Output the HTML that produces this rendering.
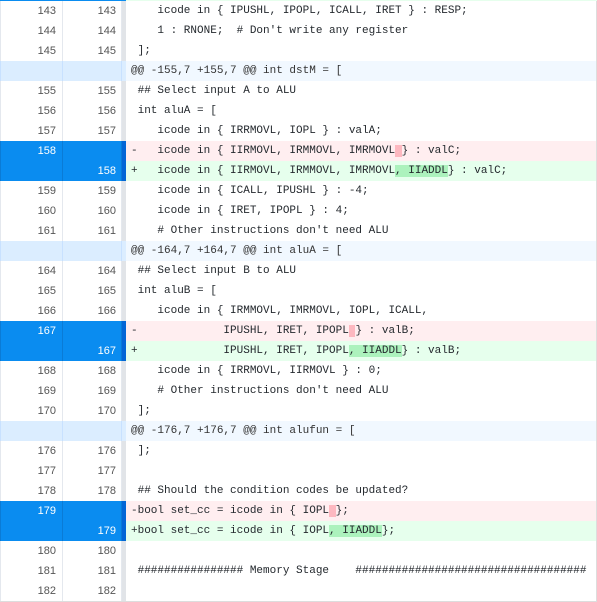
<!DOCTYPE html>
<html><head><meta charset="utf-8"><style>
*{margin:0;padding:0;box-sizing:border-box}
body{width:597px;height:602px;background:#fff;overflow:hidden;position:relative;font-family:"Liberation Sans",sans-serif}
#t{position:absolute;left:0;top:1px;width:597px;border-right:1px solid #ddd;border-bottom:1px solid #ddd}
.r{height:20px;display:flex;position:relative}
.n1,.n2{font-size:11px;color:#555;text-align:right;line-height:20px;border-right:1px solid #e4e8ee}
.n1{width:63px;padding-right:6px;border-left:1px solid #e4e8ee}
.n2{width:59px;padding-right:5px}
.g{width:4px;background:#e1e4e8}
.c{flex:1;font-family:"Liberation Mono",monospace;font-size:11px;line-height:20px;white-space:pre;color:#24292e;padding-left:5px}
.h .n1,.h .n2,.h .g{background:#dbedff;border-color:#c8e1ff}
.h .c{background:#f1f8ff;color:#333}
.d .c{background:#ffeef0}
.a .c{background:#e6ffed}
.s .n1,.s .n2{background:#0a8cf0;color:#fff;border-color:#0a7bd6}
.s .g{background:#0366d6}
.dm{background:#fdb8c0}
.am{background:#acf2bd}
#top{position:absolute;left:0;top:0;width:126px;height:1px;background:#0a8cf0}
#top2{position:absolute;left:126px;top:0;width:471px;height:1px;background:#e6ffed}
</style></head><body>
<div id="top"></div><div id="top2"></div>
<div id="t">
<div class="r"><div class="n1">143</div><div class="n2">143</div><div class="g"></div><div class="c">    icode in { IPUSHL, IPOPL, ICALL, IRET } : RESP;</div></div>
<div class="r"><div class="n1">144</div><div class="n2">144</div><div class="g"></div><div class="c">    1 : RNONE;  # Don't write any register</div></div>
<div class="r"><div class="n1">145</div><div class="n2">145</div><div class="g"></div><div class="c"> ];</div></div>
<div class="r h"><div class="n1"></div><div class="n2"></div><div class="g"></div><div class="c">@@ -155,7 +155,7 @@ int dstM = [</div></div>
<div class="r"><div class="n1">155</div><div class="n2">155</div><div class="g"></div><div class="c"> ## Select input A to ALU</div></div>
<div class="r"><div class="n1">156</div><div class="n2">156</div><div class="g"></div><div class="c"> int aluA = [</div></div>
<div class="r"><div class="n1">157</div><div class="n2">157</div><div class="g"></div><div class="c">    icode in { IRRMOVL, IOPL } : valA;</div></div>
<div class="r d s"><div class="n1">158</div><div class="n2"></div><div class="g"></div><div class="c">-   icode in { IIRMOVL, IRMMOVL, IMRMOVL<span class="dm"> </span>} : valC;</div></div>
<div class="r a s"><div class="n1"></div><div class="n2">158</div><div class="g"></div><div class="c">+   icode in { IIRMOVL, IRMMOVL, IMRMOVL<span class="am">, IIADDL</span>} : valC;</div></div>
<div class="r"><div class="n1">159</div><div class="n2">159</div><div class="g"></div><div class="c">    icode in { ICALL, IPUSHL } : -4;</div></div>
<div class="r"><div class="n1">160</div><div class="n2">160</div><div class="g"></div><div class="c">    icode in { IRET, IPOPL } : 4;</div></div>
<div class="r"><div class="n1">161</div><div class="n2">161</div><div class="g"></div><div class="c">    # Other instructions don't need ALU</div></div>
<div class="r h"><div class="n1"></div><div class="n2"></div><div class="g"></div><div class="c">@@ -164,7 +164,7 @@ int aluA = [</div></div>
<div class="r"><div class="n1">164</div><div class="n2">164</div><div class="g"></div><div class="c"> ## Select input B to ALU</div></div>
<div class="r"><div class="n1">165</div><div class="n2">165</div><div class="g"></div><div class="c"> int aluB = [</div></div>
<div class="r"><div class="n1">166</div><div class="n2">166</div><div class="g"></div><div class="c">    icode in { IRMMOVL, IMRMOVL, IOPL, ICALL,</div></div>
<div class="r d s"><div class="n1">167</div><div class="n2"></div><div class="g"></div><div class="c">-             IPUSHL, IRET, IPOPL<span class="dm"> </span>} : valB;</div></div>
<div class="r a s"><div class="n1"></div><div class="n2">167</div><div class="g"></div><div class="c">+             IPUSHL, IRET, IPOPL<span class="am">, IIADDL</span>} : valB;</div></div>
<div class="r"><div class="n1">168</div><div class="n2">168</div><div class="g"></div><div class="c">    icode in { IRRMOVL, IIRMOVL } : 0;</div></div>
<div class="r"><div class="n1">169</div><div class="n2">169</div><div class="g"></div><div class="c">    # Other instructions don't need ALU</div></div>
<div class="r"><div class="n1">170</div><div class="n2">170</div><div class="g"></div><div class="c"> ];</div></div>
<div class="r h"><div class="n1"></div><div class="n2"></div><div class="g"></div><div class="c">@@ -176,7 +176,7 @@ int alufun = [</div></div>
<div class="r"><div class="n1">176</div><div class="n2">176</div><div class="g"></div><div class="c"> ];</div></div>
<div class="r"><div class="n1">177</div><div class="n2">177</div><div class="g"></div><div class="c"> </div></div>
<div class="r"><div class="n1">178</div><div class="n2">178</div><div class="g"></div><div class="c"> ## Should the condition codes be updated?</div></div>
<div class="r d s"><div class="n1">179</div><div class="n2"></div><div class="g"></div><div class="c">-bool set_cc = icode in { IOPL<span class="dm"> </span>};</div></div>
<div class="r a s"><div class="n1"></div><div class="n2">179</div><div class="g"></div><div class="c">+bool set_cc = icode in { IOPL<span class="am">, IIADDL</span>};</div></div>
<div class="r"><div class="n1">180</div><div class="n2">180</div><div class="g"></div><div class="c"> </div></div>
<div class="r"><div class="n1">181</div><div class="n2">181</div><div class="g"></div><div class="c"> ################ Memory Stage    ###################################</div></div>
<div class="r"><div class="n1">182</div><div class="n2">182</div><div class="g"></div><div class="c"> </div></div>
</div>
</body></html>
